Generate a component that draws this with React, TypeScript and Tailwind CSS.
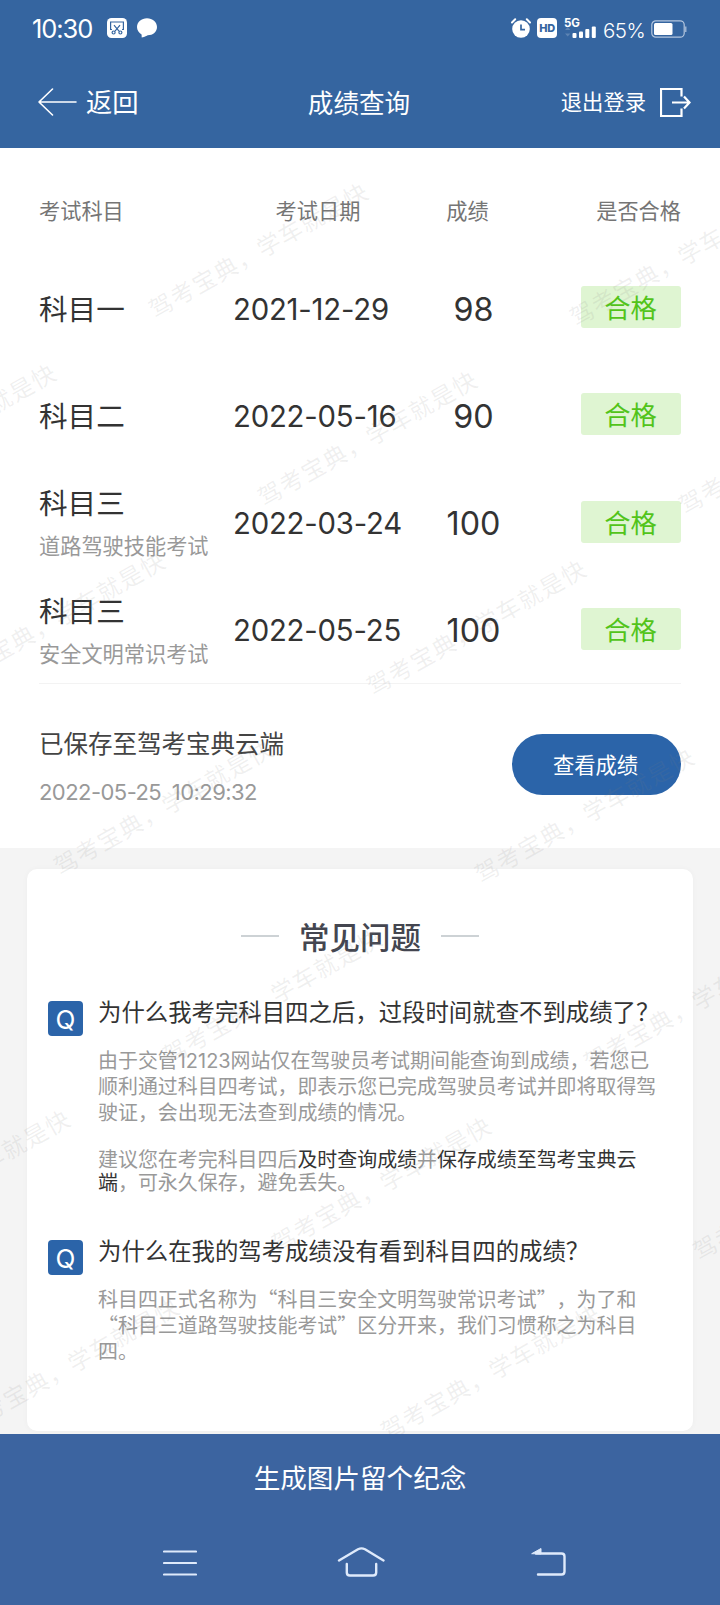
import type { ReactNode } from 'react'

const results = [
    { name: '科目一', date: '2021-12-29', score: 98 },
    { name: '科目二', date: '2022-05-16', score: 90 },
    { name: '科目三', sub: '道路驾驶技能考试', date: '2022-03-24', score: 100 },
    { name: '科目三', sub: '安全文明常识考试', date: '2022-05-25', score: 100 },
]

// [column, row] of every watermark on the slanted grid
const marks = [
    [0, 0], [1, 0],
    [-1, 1], [0, 1], [1, 1],
    [-1, 2], [0, 2],
    [-1, 3], [0, 3],
    [-1, 4], [0, 4],
    [-2, 5], [-1, 5], [0, 5],
    [-2, 6], [-1, 6],
]

function StatusBar() {
    return (
        <div className="flex h-[56px] items-center justify-between pl-[32px] pr-[33px] text-white">
            <div className="flex items-center">
                <span className="w-[75px] pt-px text-[25.5px] leading-none tracking-[-1.1px]">10:30</span>
                <svg width="20" height="20" viewBox="0 0 20 20">
                    <rect width="20" height="20" rx="4.5" fill="#fff" />
                    <g fill="none" stroke="#3565a0" strokeWidth="1.2">
                        <path d="M5 11.5H3.6V4h12.8v7.500H15" />
                        <path d="M7 7.200l5 6M13 7.200l-5 6" />
                        <circle cx="6.600" cy="14.500" r="1.500" />
                        <circle cx="13.400" cy="14.500" r="1.500" />
                    </g>
                </svg>
                <svg className="ml-[10px]" width="20" height="20" viewBox="0 0 20 20" fill="#fff">
                    <path d="M10 0.200C4.500 0.200 0 3.900 0 9c0 3.200 1.800 5.900 4.600 7.400L4.700 19.500c3.500-.6 5-1.600 6-2.200C16 17.200 20 13.800 20 9 20 3.900 15.500.2 10 .2z" />
                </svg>
            </div>
            <div className="flex items-center">
                <svg width="20" height="20" viewBox="0 0 20 20">
                    <circle cx="10" cy="11" r="8.800" fill="#fff" />
                    <path d="M1 4.500L4.200 1.200M19 4.500L15.800 1.200" stroke="#fff" strokeWidth="2" strokeLinecap="round" />
                    <path d="M10 6.500v5.200h4" fill="none" stroke="#3565a0" strokeWidth="1.700" />
                </svg>
                <span className="ml-[6px] flex h-5 w-5 items-center justify-center rounded-[4px] bg-white pt-px text-[11px] font-extrabold leading-none tracking-[-0.4px] text-[#3565a0]">HD</span>
                <div className="ml-[7px] flex h-5 w-[33px] flex-col justify-between">
                    <span className="text-[11.5px] font-bold leading-[10px]">5G</span>
                    <svg className="-mt-1" width="33" height="12" viewBox="0 0 33 12" fill="#fff">
                        <path d="M1 4L3.700 1l2.700 3zM1 7.500l2.700 3 2.700-3z" opacity="0.200" />
                        <rect x="8.500" y="7" width="4" height="5" rx="1" />
                        <rect x="15" y="5.500" width="4" height="6.500" rx="1" />
                        <rect x="21.300" y="3" width="4" height="9" rx="1" />
                        <rect x="27.800" y="0.500" width="4" height="11.500" rx="1" />
                    </svg>
                </div>
                <span className="ml-[6px] w-[48px] pt-[6px] text-[20.5px] font-light leading-none tracking-[-0.5px]">65%</span>
                <svg className="mt-[2px]" width="36" height="18" viewBox="0 0 36 18">
                    <rect x="0.800" y="0.800" width="32.400" height="16.400" rx="4" fill="none" stroke="#b4c6de" strokeWidth="1.200" />
                    <rect x="3" y="3" width="18.500" height="12" rx="1.500" fill="#fff" />
                    <path d="M34.800 6.500v5.500" stroke="#b4c6de" strokeWidth="1.200" />
                </svg>
            </div>
        </div>
    )
}

function NavHeader() {
    return (
        <div className="grid h-[92px] grid-cols-3 items-center pl-[38px] pr-[29px] text-[26.3px] leading-none text-white">
            <div className="flex items-center">
                <svg width="39" height="28" viewBox="0 0 39 28" fill="none" stroke="#fff" strokeWidth="1.600" strokeLinecap="round" strokeLinejoin="round">
                    <path d="M14.500 1L1 14l13.500 13M1 14h37" />
                </svg>
                <span className="ml-[9px] pt-[3px]">返回</span>
            </div>
            <div className="pr-[11px] pt-[4px] text-center text-[25.6px]">成绩查询</div>
            <div className="flex items-center justify-end">
                <span className="pt-[2px] text-[21.3px]">退出登录</span>
                <svg className="ml-[14px]" width="31" height="29" viewBox="0 0 31 29" fill="none" stroke="#fff" strokeWidth="2.200">
                    <path d="M21.500 8.500V1H1v27h20.500v-7.500" />
                    <path d="M12 14.500h17M24 8.500l5.500 6-5.500 6" />
                </svg>
            </div>
        </div>
    )
}

function Question({ title, children }: { title: string; children: ReactNode }) {
    return (
        <div className="flex">
            <div className="flex h-[35px] w-[35px] shrink-0 items-center justify-center rounded-[4px] bg-[#2b64a9] pt-[3px] text-[26px] leading-none text-white">Q</div>
            <div className="ml-[15px] w-[560px]">
                <h3 className="whitespace-nowrap text-[23.4px] leading-[24px] text-[#333]">{title}</h3>
                {children}
            </div>
        </div>
    )
}

export default function App() {
    return (
        <div className="w-[720px] h-[1605px] overflow-hidden bg-[#f4f4f4] font-['Inter','Noto_Sans_CJK_SC',sans-serif] [text-spacing-trim:space-all]">
            <header className="h-[148px] bg-[#3565a0]">
                <StatusBar />
                <NavHeader />
            </header>

            <main className="relative h-[1286px] overflow-hidden">
                <section className="h-[700px] bg-white px-[39px]">
                    <div className="grid h-[105.5px] grid-cols-[195px_168px_143px_1fr] pt-[51px] text-[21.2px] leading-[24px] text-[#757575]">
                        <div>考试科目</div>
                        <div className="text-center">考试日期</div>
                        <div className="pr-[12px] text-center">成绩</div>
                        <div className="text-right">是否合格</div>
                    </div>
                    {results.map((r, i) => (
                        <div key={i} className="grid h-[107.3px] grid-cols-[195px_168px_143px_1fr] items-center text-[#333]">
                            <div className={r.sub ? 'pt-[3px]' : 'pt-[5px]'}>
                                <div className="text-[28.6px] leading-[32px]">{r.name}</div>
                                {r.sub && <div className="mt-[14px] whitespace-nowrap text-[21.2px] leading-[24px] text-[#999]">{r.sub}</div>}
                            </div>
                            <div className="-ml-px whitespace-nowrap pt-[4px] text-[29.3px] leading-none tracking-[-0.2px]">{r.date}</div>
                            <div className="pt-[5px] text-center text-[32.3px] leading-none">{r.score}</div>
                            <div className="flex h-[42px] w-[100px] items-center justify-center justify-self-end rounded-[3px] bg-[#dff5d2] pt-[4px] pr-px text-[26.3px] leading-none text-[#52c41a]">合格</div>
                        </div>
                    ))}
                    <div className="flex items-start justify-between border-t border-[#f3f3f3] pt-[47px]">
                        <div>
                            <div className="text-[24.5px] leading-[26px] text-[#444]">已保存至驾考宝典云端</div>
                            <div className="mt-[23px] text-[22px] leading-[24px] tracking-[-0.55px] [word-spacing:5px] text-[#999]">2022-05-25 10:29:32</div>
                        </div>
                        <button className="mt-[3px] h-[61px] w-[169px] rounded-full bg-[#2b64a9] pt-[3px] pr-[2px] text-[21.3px] text-white">查看成绩</button>
                    </div>
                </section>

                <section className="mx-[27px] mt-[21px] h-[562px] rounded-[10px] bg-white px-[21px] pt-[48px] shadow-[0_0_6px_rgba(0,0,0,0.03)]">
                    <div className="flex items-center justify-center">
                        <span className="h-[2px] w-[38px] bg-[#cdd2d5]" />
                        <h2 className="mx-[20px] pt-[3px] text-[30.5px] font-medium leading-[35px] text-[#444650]">常见问题</h2>
                        <span className="h-[2px] w-[38px] bg-[#cdd2d5]" />
                    </div>
                    <div className="mt-[46px]">
                        <Question title="为什么我考完科目四之后，过段时间就查不到成绩了？">
                            <p className="mt-[23px] whitespace-nowrap text-[19.96px] leading-[26.2px] text-[#999]">
                                由于交管12123网站仅在驾驶员考试期间能查询到成绩，若您已<br />
                                顺利通过科目四考试，即表示您已完成驾驶员考试并即将取得驾<br />
                                驶证，会出现无法查到成绩的情况。
                            </p>
                            <p className="mt-[22px] whitespace-nowrap text-[19.96px] leading-[23.5px] text-[#999]">
                                建议您在考完科目四后<span className="text-[#333]">及时查询成绩</span>并<span className="text-[#333]">保存成绩至驾考宝典云</span><br />
                                <span className="text-[#333]">端</span>，可永久保存，避免丢失。
                            </p>
                        </Question>
                    </div>
                    <div className="mt-[44px]">
                        <Question title="为什么在我的驾考成绩没有看到科目四的成绩？">
                            <p className="mt-[22px] whitespace-nowrap font-['Noto_Sans_CJK_SC',sans-serif] text-[19.96px] leading-[26.2px] text-[#999]">
                                科目四正式名称为“科目三安全文明驾驶常识考试”，为了和<br />
                                “科目三道路驾驶技能考试”区分开来，我们习惯称之为科目<br />
                                四。
                            </p>
                        </Question>
                    </div>
                </section>

                {/* watermark */}
                <div className="pointer-events-none absolute inset-0">
                    {marks.map(([c, r]) => (
                        <span
                            key={`${c},${r}`}
                            className="absolute w-[250px] origin-center -rotate-[29.5deg] whitespace-nowrap text-center text-[23.5px] leading-[30px] tracking-[1.3px] text-[#808080]/12"
                            style={{ left: 134 + c * 421 + r * 108.8, top: 88 + c * 7.5 + r * 188.3 }}
                        >
                            驾考宝典，学车就是快
                        </span>
                    ))}
                </div>
            </main>

            <footer className="h-[171px] bg-[#3c64a0]">
                <div className="flex h-[88px] items-center justify-center text-[26.6px] leading-none text-white">生成图片留个纪念</div>
                <div className="flex items-center justify-between pl-[163px] pr-[153px] pt-[24px]">
                    <svg width="34" height="30" viewBox="0 0 34 30" stroke="#dfeafb" strokeWidth="2.200" strokeLinecap="round">
                        <path d="M1 4.500h32M1 16h32M1 27.500h32" />
                    </svg>
                    <svg className="-ml-[7px]" width="48" height="32" viewBox="0 0 48 32" fill="none" stroke="#dfeafb" strokeWidth="2.400" strokeLinecap="round" strokeLinejoin="round">
                        <path d="M2 14.500L21 3.300q3.500-1.800 7 0L46.500 14.500" />
                        <path d="M9.800 18v8.500q0 3 3 3h23.400q3 0 3-3V18" />
                    </svg>
                    <svg width="36" height="30" viewBox="0 0 36 30" fill="none" stroke="#dfeafb" strokeWidth="2.400" strokeLinecap="round" strokeLinejoin="round">
                        <path d="M5 6.500h25.500q3 0 3 3v15q0 3-3 3H7" />
                        <path d="M1 6.500L10 1.500v5z" fill="#dfeafb" strokeWidth="1" />
                    </svg>
                </div>
            </footer>
        </div>
    )
}
